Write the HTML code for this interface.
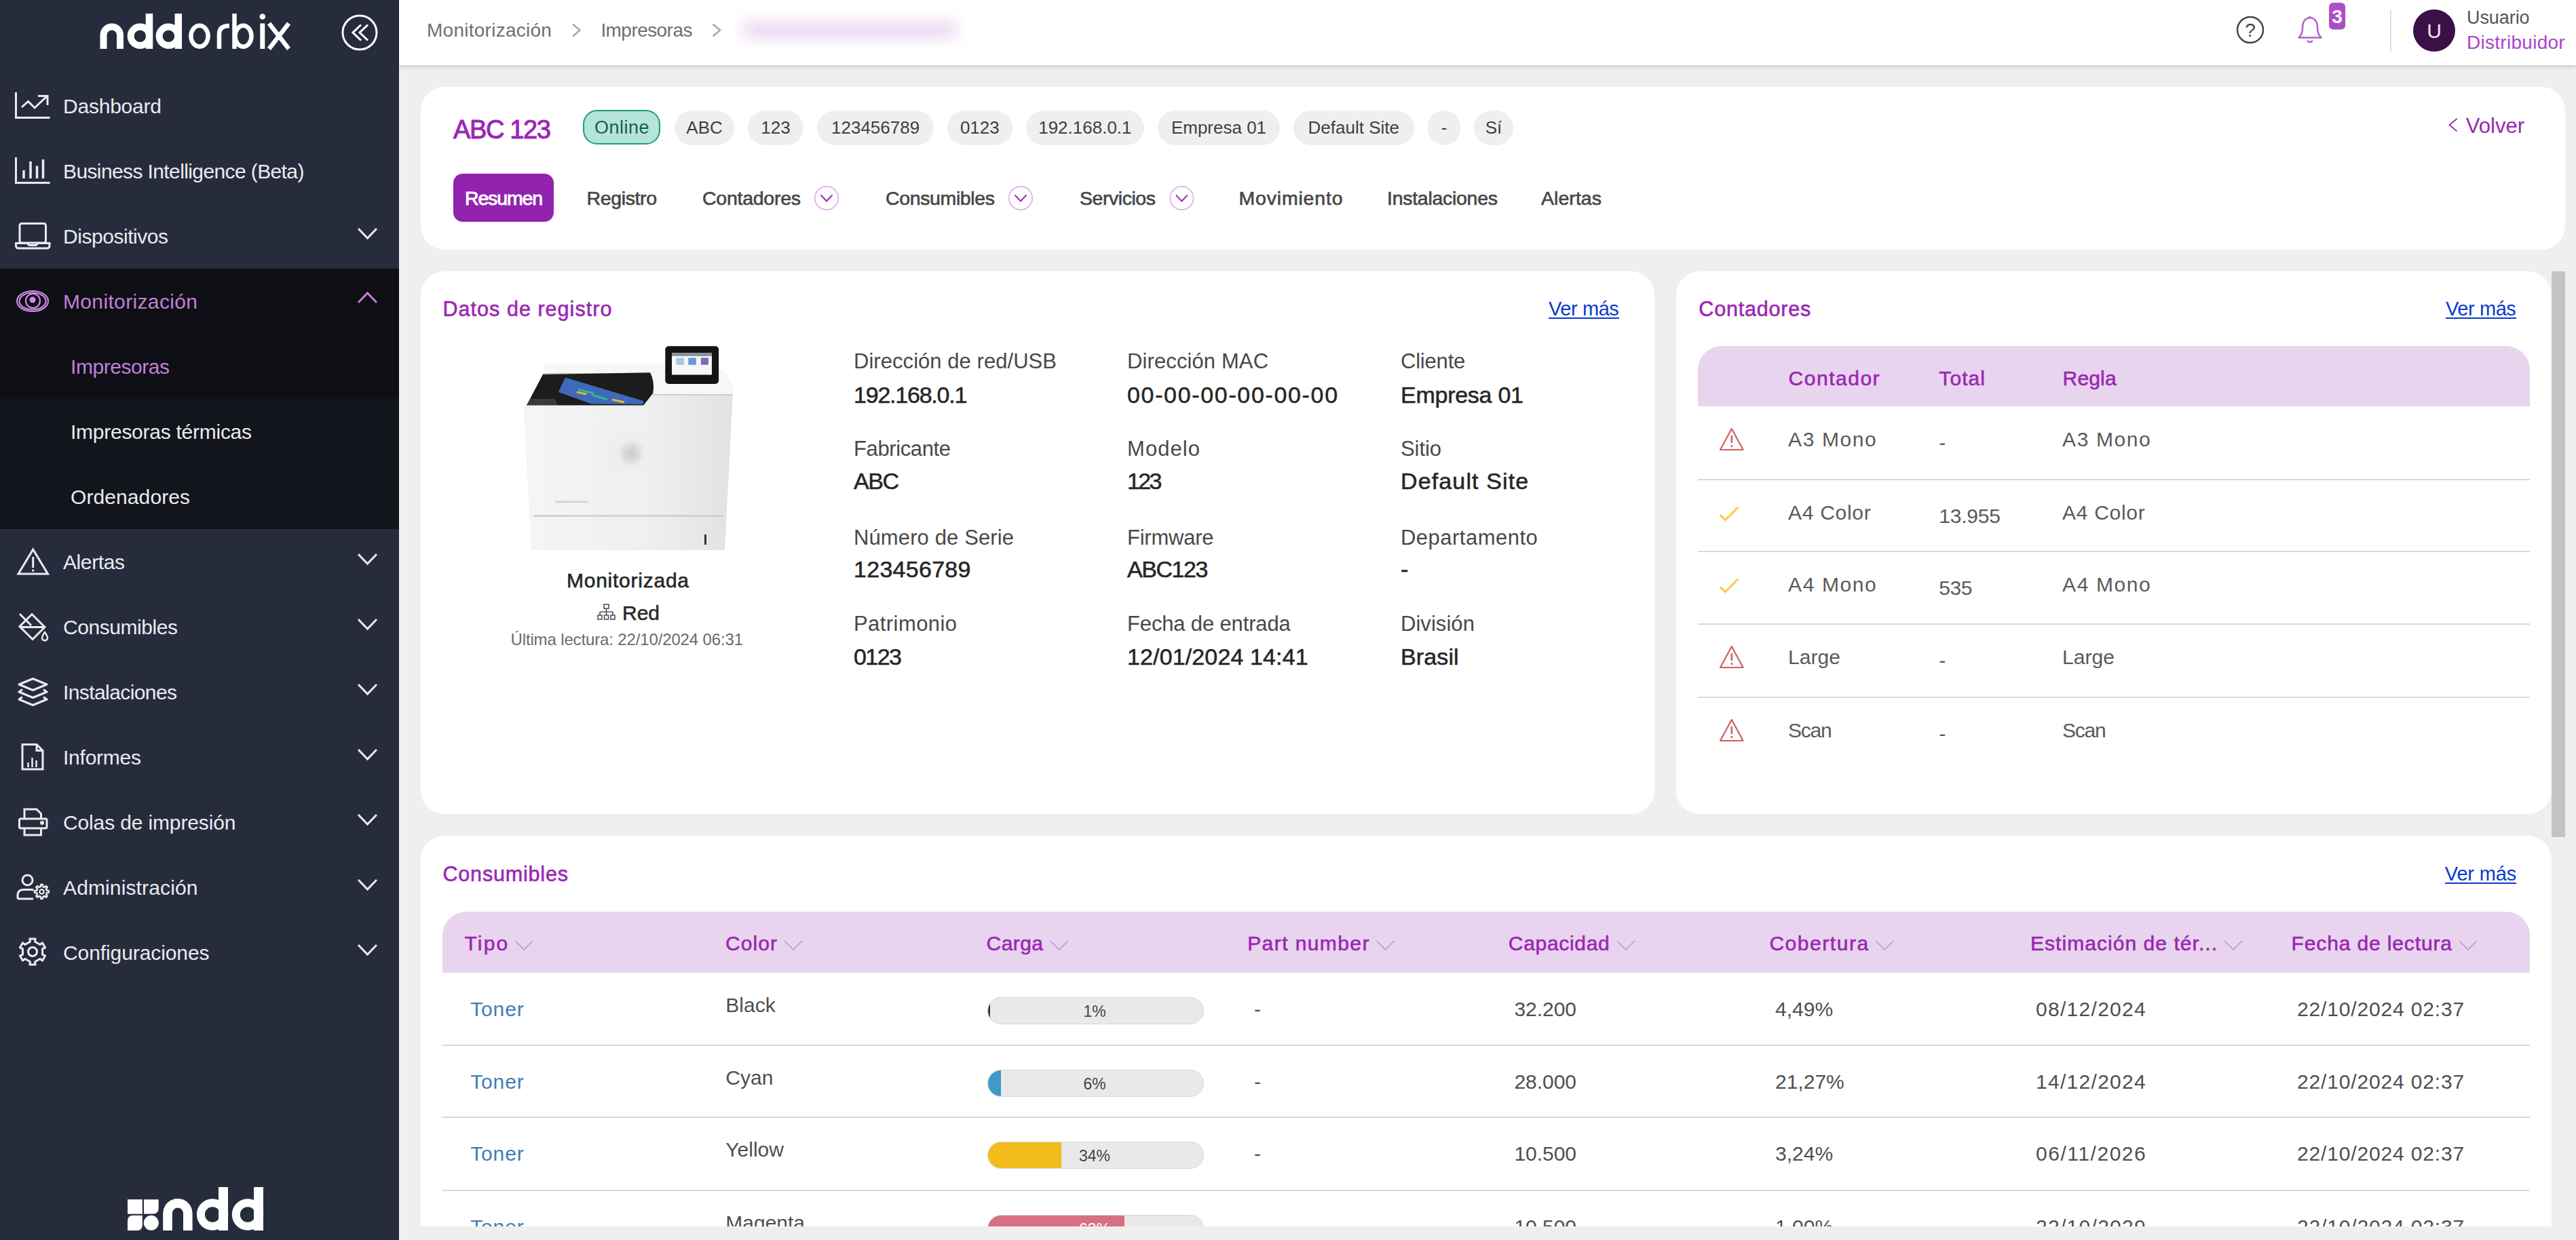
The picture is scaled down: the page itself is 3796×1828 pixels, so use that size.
<!DOCTYPE html>
<html><head><meta charset="utf-8">
<style>
*{box-sizing:border-box;margin:0;padding:0}
html,body{width:3796px;height:1828px;overflow:hidden;background:#efefef;font-family:"Liberation Sans",sans-serif}
.abs{position:absolute}
.tx{position:absolute;white-space:nowrap;line-height:1}
.card{position:absolute;background:#fff;border-radius:35px}
.chip{position:absolute;top:162.5px;height:51.5px;border-radius:26px;background:#efefef}
</style></head>
<body>

<div class="abs" style="left:0;top:0;width:588px;height:1828px;background:#272c3d"></div>
<div class="abs" style="left:0;top:396px;width:588px;height:192px;background:#0e0f14"></div>
<div class="abs" style="left:0;top:588px;width:588px;height:192px;background:#13151c"></div>
<div class="tx" style="left:93.0px;top:142.1px;font-size:30px;color:#ebebef;letter-spacing:-0.22px;">Dashboard</div>
<div class="tx" style="left:93.0px;top:238.1px;font-size:30px;color:#ebebef;letter-spacing:-0.61px;">Business Intelligence (Beta)</div>
<div class="tx" style="left:93.0px;top:334.1px;font-size:30px;color:#ebebef;letter-spacing:-0.46px;">Dispositivos</div>
<div class="tx" style="left:93.0px;top:430.1px;font-size:30px;color:#c07fd8;letter-spacing:0.35px;">Monitorización</div>
<div class="tx" style="left:93.0px;top:814.1px;font-size:30px;color:#ebebef;letter-spacing:-0.40px;">Alertas</div>
<div class="tx" style="left:93.0px;top:910.1px;font-size:30px;color:#ebebef;letter-spacing:-0.44px;">Consumibles</div>
<div class="tx" style="left:93.0px;top:1006.1px;font-size:30px;color:#ebebef;letter-spacing:-0.59px;">Instalaciones</div>
<div class="tx" style="left:93.0px;top:1102.1px;font-size:30px;color:#ebebef;letter-spacing:-0.24px;">Informes</div>
<div class="tx" style="left:93.0px;top:1198.1px;font-size:30px;color:#ebebef;letter-spacing:-0.14px;">Colas de impresión</div>
<div class="tx" style="left:93.0px;top:1294.1px;font-size:30px;color:#ebebef;letter-spacing:0.13px;">Administración</div>
<div class="tx" style="left:93.0px;top:1390.1px;font-size:30px;color:#ebebef;letter-spacing:-0.09px;">Configuraciones</div>
<div class="tx" style="left:104.0px;top:525.6px;font-size:30px;color:#c07fd8;letter-spacing:-0.45px;">Impresoras</div>
<div class="tx" style="left:104.0px;top:621.6px;font-size:30px;color:#ebebef;letter-spacing:-0.26px;">Impresoras térmicas</div>
<div class="tx" style="left:104.0px;top:717.6px;font-size:30px;color:#ebebef;letter-spacing:0.09px;">Ordenadores</div>
<svg class="abs" style="left:0;top:0" width="588" height="1828" fill="none" stroke="#ebebef" stroke-width="3">
<path d="M528,337 L541.5,351 L555,337"/>
<path d="M528,446 L541.5,432 L555,446" stroke="#c07fd8"/>
<path d="M528,817 L541.5,831 L555,817"/>
<path d="M528,913 L541.5,927 L555,913"/>
<path d="M528,1009 L541.5,1023 L555,1009"/>
<path d="M528,1105 L541.5,1119 L555,1105"/>
<path d="M528,1201 L541.5,1215 L555,1201"/>
<path d="M528,1297 L541.5,1311 L555,1297"/>
<path d="M528,1393 L541.5,1407 L555,1393"/>
<!-- dashboard -->
<path d="M23.5,136 V173.5 H73.5"/>
<path d="M32,158 L41.5,149.5 L51,159 L69.5,141.5"/>
<path d="M56,141.5 H70 V155"/>
<!-- BI -->
<path d="M23.5,232 V269.5 H73.5"/>
<path d="M35,251 V263 M45,238 V263 M54.5,244.5 V263 M63.5,235 V263" stroke-width="3.5"/>
<!-- laptop -->
<rect x="29" y="329.5" width="38.5" height="28.5" rx="3"/>
<path d="M23.5,358.5 H40 L43,361.5 H53 L56,358.5 H73 V362 Q73,366 69,366 H27.5 Q23.5,366 23.5,362 Z"/>
<!-- eye -->
<g stroke="#d08be6" stroke-width="2.2">
<ellipse cx="48" cy="444" rx="23" ry="15"/>
<ellipse cx="48" cy="444" rx="19.5" ry="12.5"/>
<circle cx="48.5" cy="443.5" r="10.5"/>
<circle cx="48" cy="442" r="4.5" fill="#d08be6" stroke="none"/>
</g>
<!-- alert -->
<path d="M48.7,810 L27,846 H70.5 Z"/>
<path d="M48.7,821 V837 M48.7,839.5 V842.5"/>
<!-- consumibles bucket -->
<path d="M47,905.5 L66,924.5 L48,942.5 L29,923.5 Z"/>
<path d="M29,924.5 H65"/>
<path d="M29,905 L46,922"/>
<path d="M66,932 Q60,940 63,943 Q66,945.5 69,943 Q72,940 66,932 Z" stroke-width="2.5"/>
<!-- layers -->
<path d="M28,1009 L48.5,1000.5 L69,1009 L48.5,1017.5 Z" stroke-linejoin="round"/>
<path d="M33,1016.5 L28,1020 L48.5,1028.5 L69,1020 L64,1016.5" stroke-linejoin="round"/>
<path d="M33,1027.5 L28,1031 L48.5,1039.5 L69,1031 L64,1027.5" stroke-linejoin="round"/>
<!-- informes -->
<path d="M33,1097.5 H54 L63,1106.5 V1134 H33 Z"/>
<path d="M54,1097.5 V1106.5 H63"/>
<path d="M41.5,1124 V1131 M47.5,1117 V1131 M53.5,1121 V1131" stroke-width="2.5"/>
<!-- printer -->
<path d="M36,1207 V1193 H54 L60.5,1199.5 V1207"/>
<rect x="28.5" y="1207" width="40.5" height="14" rx="2"/>
<path d="M36,1221 V1231 H60.5 V1221"/>
<circle cx="62" cy="1213" r="1.5" fill="#f4f4f4"/>
<!-- admin -->
<circle cx="40.5" cy="1297.5" r="7.5"/>
<path d="M26,1325 V1320 Q26,1311.5 34.5,1311.5 H46 Q48,1311.5 49.5,1312.5"/>
<path d="M26,1325 H49"/>
<path d="M68.90,1312.78 L71.91,1313.12 L71.91,1315.88 L68.90,1316.22 L67.95,1318.52 L69.84,1320.88 L67.88,1322.84 L65.52,1320.95 L63.22,1321.90 L62.88,1324.91 L60.12,1324.91 L59.78,1321.90 L57.48,1320.95 L55.12,1322.84 L53.16,1320.88 L55.05,1318.52 L54.10,1316.22 L51.09,1315.88 L51.09,1313.12 L54.10,1312.78 L55.05,1310.48 L53.16,1308.12 L55.12,1306.16 L57.48,1308.05 L59.78,1307.10 L60.12,1304.09 L62.88,1304.09 L63.22,1307.10 L65.52,1308.05 L67.88,1306.16 L69.84,1308.12 L67.95,1310.48 Z" stroke-width="2.5" stroke-linejoin="round"/>
<circle cx="61.5" cy="1314.5" r="3.2" stroke-width="2.2"/>
<!-- gear -->
<path d="M44.45,1388.22 L43.82,1383.95 L52.18,1383.95 L51.55,1388.22 L59.03,1392.54 L62.41,1389.86 L66.58,1397.10 L62.57,1398.68 L62.57,1407.32 L66.58,1408.90 L62.41,1416.14 L59.03,1413.46 L51.55,1417.78 L52.18,1422.05 L43.82,1422.05 L44.45,1417.78 L36.97,1413.46 L33.59,1416.14 L29.42,1408.90 L33.43,1407.32 L33.43,1398.68 L29.42,1397.10 L33.59,1389.86 L36.97,1392.54 Z" stroke-linejoin="round"/>
<circle cx="48" cy="1403" r="6.5"/>

<g stroke="#fff" fill="none">
<path d="M152.5,72 V51.75 A12.25,12.25 0 0 1 177,51.75 V72" stroke-width="10"/>
<circle cx="206.4" cy="53.25" r="13.75" stroke-width="10"/>
<path d="M220,20 V72" stroke-width="10.5"/>
<circle cx="248.4" cy="53.25" r="13.75" stroke-width="10"/>
<path d="M262.8,20 V72" stroke-width="10.5"/>
<ellipse cx="294" cy="53.25" rx="12.6" ry="15.4" stroke-width="6.5"/>
<path d="M323,72 V50 Q323,38 338,38" stroke-width="6.5"/>
<path d="M345.5,20 V72" stroke-width="6.5"/>
<ellipse cx="358.5" cy="53.25" rx="12" ry="15.4" stroke-width="6.5"/>
<path d="M386.8,34.5 V72" stroke-width="7"/>
<circle cx="386.8" cy="24.5" r="4.3" fill="#fff" stroke="none"/>
<path d="M396.5,34.5 L425.5,72 M425.5,34.5 L396.5,72" stroke-width="6.5"/>
<circle cx="530" cy="48" r="25" stroke-width="3"/>
<path d="M532,36.5 L520,48 L532,59.5 M542,36.5 L530,48 L542,59.5" stroke-width="3"/>
</g>
<g fill="#fff" stroke="none">
<rect x="188" y="1768.2" width="21.8" height="21.4"/>
<path d="M212,1768.2 H233.7 V1781 Q233.7,1789.6 225,1789.6 H212 Z"/>
<path d="M196,1791.8 H209.8 V1806 Q209.8,1813.9 202,1813.9 H188 V1800 Q188,1791.8 196,1791.8 Z"/>
<circle cx="222.8" cy="1802.8" r="11"/>
</g>
<g stroke="#fff" fill="none">
<path d="M247,1814 V1788.7 A14.9,14.9 0 0 1 276.8,1788.7 V1814" stroke-width="13.6"/>
<circle cx="313.1" cy="1790.5" r="17.2" stroke-width="12"/>
<path d="M329,1750 V1814" stroke-width="14"/>
<circle cx="365" cy="1790.5" r="17.2" stroke-width="12"/>
<path d="M381,1750 V1814" stroke-width="14"/>
</g>
</svg>
<div class="abs" style="left:588px;top:0;width:3208px;height:96px;background:#fff;box-shadow:0 3px 6px rgba(0,0,0,.13)"></div>
<div class="tx" style="left:629.0px;top:30.6px;font-size:28px;color:#6b6f78;letter-spacing:0.26px;">Monitorización</div>
<div class="tx" style="left:885.4px;top:30.6px;font-size:28px;color:#6b6f78;letter-spacing:-0.56px;">Impresoras</div>
<svg class="abs" style="left:0;top:0" width="3796" height="96" fill="none">
<path d="M844,35.5 L854.5,44.5 L844,53.5 M1050.5,35.5 L1061,44.5 L1050.5,53.5" stroke="#a9a9a9" stroke-width="2.5"/>
<circle cx="3316" cy="44" r="19" stroke="#454545" stroke-width="2.5"/>
<path d="M3387.5,55.5 H3420.5 Q3415,50 3415,41 Q3415,27.5 3404,26 Q3393,27.5 3393,41 Q3393,50 3387.5,55.5 Z" stroke="#b560cc" stroke-width="2.5" stroke-linejoin="round"/>
<path d="M3404,23.5 V26.5 M3400,60 Q3404,64 3408,60" stroke="#b560cc" stroke-width="2.5"/>
<rect x="3432" y="4" width="24" height="39.5" rx="6" fill="#ad4ec8"/>
<rect x="3522" y="14" width="2" height="62" fill="#dedede"/>
<circle cx="3587" cy="45" r="31" fill="#3a1046"/>
</svg>
<div class="abs" style="left:1080px;top:13px;width:343px;height:55px;overflow:hidden"><div class="abs" style="left:14px;top:19px;width:317px;height:24px;background:#e9d6f1;filter:blur(11px);border-radius:10px"></div></div>
<div class="tx" style="left:3308.2px;top:31.3px;font-size:28px;color:#454545;">?</div>
<div class="tx" style="left:3436.2px;top:11.0px;font-size:28px;color:#ffffff;font-weight:bold;">3</div>
<div class="tx" style="left:3576.2px;top:31.3px;font-size:30px;color:#ece6ee;">U</div>
<div class="tx" style="left:3635.0px;top:13.1px;font-size:27px;color:#555555;letter-spacing:-0.07px;">Usuario</div>
<div class="tx" style="left:3635.0px;top:49.2px;font-size:28px;color:#ab45c6;letter-spacing:0.28px;">Distribuidor</div>
<div class="card" style="left:620px;top:128px;width:3160px;height:240px"></div>
<div class="tx" style="left:668.0px;top:171.8px;font-size:38px;color:#9a27b3;-webkit-text-stroke:1.0px #9a27b3;letter-spacing:-1.35px;">ABC 123</div>
<div class="abs" style="left:858.5px;top:161.7px;width:114.5px;height:51.7px;border-radius:21px;background:#b5e4d8;border:2px solid #1c9c7f"></div>
<div class="tx" style="left:876.0px;top:174.5px;font-size:27px;color:#17604f;letter-spacing:0.47px;">Online</div>
<div class="chip" style="left:994px;width:88.0px"></div>
<div class="tx" style="left:1011.3px;top:175.4px;font-size:26px;color:#3f3f3f;">ABC</div>
<div class="chip" style="left:1102px;width:82.0px"></div>
<div class="tx" style="left:1121.3px;top:175.4px;font-size:26px;color:#3f3f3f;">123</div>
<div class="chip" style="left:1204px;width:172.0px"></div>
<div class="tx" style="left:1225.0px;top:175.4px;font-size:26px;color:#3f3f3f;">123456789</div>
<div class="chip" style="left:1396px;width:95.7px"></div>
<div class="tx" style="left:1414.9px;top:175.4px;font-size:26px;color:#3f3f3f;">0123</div>
<div class="chip" style="left:1512px;width:173.7px"></div>
<div class="tx" style="left:1530.2px;top:175.4px;font-size:26px;color:#3f3f3f;">192.168.0.1</div>
<div class="chip" style="left:1706px;width:180.0px"></div>
<div class="tx" style="left:1725.9px;top:175.4px;font-size:26px;color:#3f3f3f;">Empresa 01</div>
<div class="chip" style="left:1906px;width:177.6px"></div>
<div class="tx" style="left:1927.6px;top:175.4px;font-size:26px;color:#3f3f3f;">Default Site</div>
<div class="chip" style="left:2104px;width:48.0px"></div>
<div class="tx" style="left:2123.7px;top:175.4px;font-size:26px;color:#3f3f3f;">-</div>
<div class="chip" style="left:2172px;width:58.0px"></div>
<div class="tx" style="left:2188.7px;top:175.4px;font-size:26px;color:#3f3f3f;">Sí</div>
<svg class="abs" style="left:3600px;top:165px" width="30" height="40" fill="none"><path d="M20.5,10 L9.5,19.2 L20.5,28.5" stroke="#9a27b3" stroke-width="1.8"/></svg>
<div class="tx" style="left:3633.8px;top:170.0px;font-size:31px;color:#9a27b3;letter-spacing:0.02px;">Volver</div>
<div class="abs" style="left:668px;top:256px;width:148px;height:71px;border-radius:14px;background:#9223af"></div>
<div class="tx" style="left:685.0px;top:277.9px;font-size:28.5px;color:#ffffff;-webkit-text-stroke:0.9px #ffffff;letter-spacing:-1.16px;">Resumen</div>
<div class="tx" style="left:864.5px;top:277.9px;font-size:28.5px;color:#474747;-webkit-text-stroke:0.65px #474747;letter-spacing:-0.37px;">Registro</div>
<div class="tx" style="left:1035.0px;top:277.9px;font-size:28.5px;color:#474747;-webkit-text-stroke:0.65px #474747;letter-spacing:-0.26px;">Contadores</div>
<div class="tx" style="left:1305.0px;top:277.9px;font-size:28.5px;color:#474747;-webkit-text-stroke:0.65px #474747;letter-spacing:-0.37px;">Consumibles</div>
<div class="tx" style="left:1591.0px;top:277.9px;font-size:28.5px;color:#474747;-webkit-text-stroke:0.65px #474747;letter-spacing:-0.45px;">Servicios</div>
<div class="tx" style="left:1825.5px;top:277.9px;font-size:28.5px;color:#474747;-webkit-text-stroke:0.65px #474747;letter-spacing:0.81px;">Movimiento</div>
<div class="tx" style="left:2044.0px;top:277.9px;font-size:28.5px;color:#474747;-webkit-text-stroke:0.65px #474747;letter-spacing:-0.28px;">Instalaciones</div>
<div class="tx" style="left:2271.0px;top:277.9px;font-size:28.5px;color:#474747;-webkit-text-stroke:0.65px #474747;letter-spacing:0.05px;">Alertas</div>
<svg class="abs" style="left:0;top:0" width="2400" height="400" fill="none">
<circle cx="1218" cy="292" r="17.2" stroke="#ddb0ea" stroke-width="1.7"/>
<path d="M1209.5,287.5 L1218,296.5 L1226.5,287.5" stroke="#9b2db5" stroke-width="2"/>
<circle cx="1504" cy="292" r="17.2" stroke="#ddb0ea" stroke-width="1.7"/>
<path d="M1495.5,287.5 L1504,296.5 L1512.5,287.5" stroke="#9b2db5" stroke-width="2"/>
<circle cx="1741.4" cy="292" r="17.2" stroke="#ddb0ea" stroke-width="1.7"/>
<path d="M1732.9,287.5 L1741.4,296.5 L1749.9,287.5" stroke="#9b2db5" stroke-width="2"/>
</svg>
<div class="card" style="left:620px;top:400px;width:1818px;height:800px"></div>
<div class="tx" style="left:652.5px;top:440.2px;font-size:30.5px;color:#9a27b3;-webkit-text-stroke:0.6px #9a27b3;letter-spacing:1.04px;">Datos de registro</div>
<div class="tx" style="left:2281.9px;top:441.4px;font-size:29px;color:#0a3acc;letter-spacing:-0.40px;">Ver más</div>
<div class="abs" style="left:2281.9px;top:468px;width:104px;height:2px;background:#0a3acc"></div>
<svg class="abs" style="left:760px;top:500px" width="330" height="320">
<defs>
<linearGradient id="bg1" x1="0" x2="1" y1="0" y2="0"><stop offset="0" stop-color="#f5f5f5"/><stop offset="0.6" stop-color="#efefef"/><stop offset="1" stop-color="#e2e2e2"/></linearGradient>
<linearGradient id="bg2" x1="0" x2="0" y1="0" y2="1"><stop offset="0" stop-color="#ffffff" stop-opacity="0.6"/><stop offset="1" stop-color="#ffffff" stop-opacity="0"/></linearGradient>
<radialGradient id="blob"><stop offset="0" stop-color="#cbcbcb"/><stop offset="0.5" stop-color="#dcdcdc"/><stop offset="1" stop-color="#eeeeee" stop-opacity="0"/></radialGradient>
</defs>
<path d="M42,37 H280 Q316,40 320,77 L308,311 H23 L11.5,100 L16,97 L40,52 Z" fill="url(#bg1)"/>
<path d="M42,37 H280 Q316,40 320,77 L320,82 H202 L198,50 H40 Z" fill="#f7f7f7"/>
<path d="M40,51 H198" stroke="#c9c9c9" stroke-width="2"/>
<path d="M202,82 H320" stroke="#cdcdcd" stroke-width="2"/>
<path d="M40,52 L198,49.3 Q205,62 202.4,79.4 L188.3,97.4 H16 Z" fill="#1c1c1c"/>
<path d="M22,88 L58,88 L62,97 H16 Z" fill="#3a3a3a"/>
<path d="M73,56.4 L188,91 L188.3,96 L111.5,95.4 L62.8,78 Z" fill="#3f69b9"/>
<path d="M92,74 L115,80 M112,82 L135,89" stroke="#2fb597" stroke-width="3"/>
<path d="M90,78 L104,81 M142,89 L160,93" stroke="#eab52c" stroke-width="3"/>
<rect x="220.3" y="10.2" width="78.8" height="55.8" rx="5" fill="#141414"/>
<rect x="230" y="20" width="59" height="32.5" fill="#f4f6f8"/>
<rect x="230" y="20" width="59" height="5" fill="#8d9298"/>
<rect x="236.4" y="27.5" width="11.5" height="10.3" fill="#a9c7ea"/>
<rect x="254.3" y="27.5" width="11.5" height="10.3" fill="#6b9ad8"/>
<rect x="272.9" y="27.5" width="11" height="10.3" fill="#7e68b8"/>
<path d="M26,260.6 H306" stroke="#c6c6c6" stroke-width="2"/>
<rect x="127.7" y="138" width="74.6" height="57.8" fill="#efefef"/>
<circle cx="170" cy="168" r="24" fill="url(#blob)"/>
<rect x="58" y="238.5" width="48" height="2.5" fill="#d0d0d0"/>
<rect x="278" y="288" width="3" height="15" fill="#333"/>
</svg>
<div class="tx" style="left:835.0px;top:840.6px;font-size:30px;color:#262626;-webkit-text-stroke:0.6px #262626;letter-spacing:0.75px;">Monitorizada</div>
<svg class="abs" style="left:878px;top:888px" width="32" height="30" fill="none" stroke="#555" stroke-width="1.6">
<rect x="12" y="3" width="7" height="6"/><path d="M15.5,9 V14 M6,14 H25 M6,14 V19 M15.5,14 V19 M25,14 V19"/>
<rect x="3" y="19" width="6" height="6"/><rect x="12.5" y="19" width="6" height="6"/><rect x="22" y="19" width="6" height="6"/>
</svg>
<div class="tx" style="left:917.0px;top:888.6px;font-size:30px;color:#262626;-webkit-text-stroke:0.5px #262626;">Red</div>
<div class="tx" style="left:752.5px;top:931.2px;font-size:24px;color:#6a6a6a;letter-spacing:-0.14px;">Última lectura: 22/10/2024 06:31</div>
<div class="tx" style="left:1258.0px;top:517.3px;font-size:31px;color:#484848;letter-spacing:0.05px;">Dirección de red/USB</div>
<div class="tx" style="left:1258.0px;top:564.9px;font-size:34px;color:#262626;-webkit-text-stroke:0.55px #262626;letter-spacing:-1.22px;">192.168.0.1</div>
<div class="tx" style="left:1661.0px;top:517.3px;font-size:31px;color:#484848;letter-spacing:0.11px;">Dirección MAC</div>
<div class="tx" style="left:1661.0px;top:564.9px;font-size:34px;color:#262626;-webkit-text-stroke:0.55px #262626;letter-spacing:1.66px;">00-00-00-00-00-00</div>
<div class="tx" style="left:2064.0px;top:517.3px;font-size:31px;color:#484848;letter-spacing:-0.20px;">Cliente</div>
<div class="tx" style="left:2064.0px;top:564.9px;font-size:34px;color:#262626;-webkit-text-stroke:0.55px #262626;letter-spacing:-0.26px;">Empresa 01</div>
<div class="tx" style="left:1258.0px;top:645.8px;font-size:31px;color:#484848;letter-spacing:-0.38px;">Fabricante</div>
<div class="tx" style="left:1258.0px;top:692.2px;font-size:34px;color:#262626;-webkit-text-stroke:0.55px #262626;letter-spacing:-1.45px;">ABC</div>
<div class="tx" style="left:1661.0px;top:645.8px;font-size:31px;color:#484848;letter-spacing:1.07px;">Modelo</div>
<div class="tx" style="left:1661.0px;top:692.2px;font-size:34px;color:#262626;-webkit-text-stroke:0.55px #262626;letter-spacing:-2.66px;">123</div>
<div class="tx" style="left:2064.0px;top:645.8px;font-size:31px;color:#484848;letter-spacing:-0.07px;">Sitio</div>
<div class="tx" style="left:2064.0px;top:692.2px;font-size:34px;color:#262626;-webkit-text-stroke:0.55px #262626;letter-spacing:1.13px;">Default Site</div>
<div class="tx" style="left:1258.0px;top:776.5px;font-size:31px;color:#484848;letter-spacing:0.12px;">Número de Serie</div>
<div class="tx" style="left:1258.0px;top:822.2px;font-size:34px;color:#262626;-webkit-text-stroke:0.55px #262626;letter-spacing:0.28px;">123456789</div>
<div class="tx" style="left:1661.0px;top:776.5px;font-size:31px;color:#484848;letter-spacing:-0.24px;">Firmware</div>
<div class="tx" style="left:1661.0px;top:822.2px;font-size:34px;color:#262626;-webkit-text-stroke:0.55px #262626;letter-spacing:-1.46px;">ABC123</div>
<div class="tx" style="left:2064.0px;top:776.5px;font-size:31px;color:#484848;letter-spacing:0.48px;">Departamento</div>
<div class="tx" style="left:2064.0px;top:822.2px;font-size:34px;color:#262626;-webkit-text-stroke:0.55px #262626;">-</div>
<div class="tx" style="left:1258.0px;top:903.8px;font-size:31px;color:#484848;letter-spacing:0.43px;">Patrimonio</div>
<div class="tx" style="left:1258.0px;top:950.9px;font-size:34px;color:#262626;-webkit-text-stroke:0.55px #262626;letter-spacing:-1.54px;">0123</div>
<div class="tx" style="left:1661.0px;top:903.8px;font-size:31px;color:#484848;letter-spacing:-0.15px;">Fecha de entrada</div>
<div class="tx" style="left:1661.0px;top:950.9px;font-size:34px;color:#262626;-webkit-text-stroke:0.55px #262626;letter-spacing:0.13px;">12/01/2024 14:41</div>
<div class="tx" style="left:2064.0px;top:903.8px;font-size:31px;color:#484848;letter-spacing:0.05px;">División</div>
<div class="tx" style="left:2064.0px;top:950.9px;font-size:34px;color:#262626;-webkit-text-stroke:0.55px #262626;letter-spacing:0.12px;">Brasil</div>
<div class="card" style="left:2470px;top:400px;width:1290px;height:800px"></div>
<div class="tx" style="left:2503.3px;top:439.5px;font-size:30.5px;color:#9a27b3;-webkit-text-stroke:0.6px #9a27b3;letter-spacing:0.81px;">Contadores</div>
<div class="tx" style="left:3603.9px;top:441.4px;font-size:29px;color:#0a3acc;letter-spacing:-0.40px;">Ver más</div>
<div class="abs" style="left:3603.9px;top:468px;width:104px;height:2px;background:#0a3acc"></div>
<div class="abs" style="left:2501.7px;top:509.7px;width:1226.3px;height:89.3px;background:#e9d4ef;border-radius:35px 35px 0 0"></div>
<div class="tx" style="left:2635.6px;top:542.6px;font-size:30px;color:#9a27b3;-webkit-text-stroke:0.6px #9a27b3;letter-spacing:1.51px;">Contador</div>
<div class="tx" style="left:2857.3px;top:542.6px;font-size:30px;color:#9a27b3;-webkit-text-stroke:0.6px #9a27b3;letter-spacing:1.08px;">Total</div>
<div class="tx" style="left:3039.6px;top:542.6px;font-size:30px;color:#9a27b3;-webkit-text-stroke:0.6px #9a27b3;letter-spacing:0.15px;">Regla</div>
<div class="tx" style="left:2635.0px;top:633.1px;font-size:30px;color:#5a5a5a;letter-spacing:1.62px;">A3 Mono</div>
<div class="tx" style="left:3039.0px;top:633.1px;font-size:30px;color:#5a5a5a;letter-spacing:1.62px;">A3 Mono</div>
<div class="tx" style="left:2857.3px;top:638.1px;font-size:30px;color:#5a5a5a;">-</div>
<div class="tx" style="left:2635.0px;top:740.6px;font-size:30px;color:#5a5a5a;letter-spacing:0.72px;">A4 Color</div>
<div class="tx" style="left:3039.0px;top:740.6px;font-size:30px;color:#5a5a5a;letter-spacing:0.72px;">A4 Color</div>
<div class="tx" style="left:2857.3px;top:745.6px;font-size:30px;color:#5a5a5a;letter-spacing:-0.21px;">13.955</div>
<div class="abs" style="left:2501.7px;top:705.5px;width:1226.3px;height:2px;background:#d9d9d9"></div>
<div class="tx" style="left:2635.0px;top:846.6px;font-size:30px;color:#5a5a5a;letter-spacing:1.62px;">A4 Mono</div>
<div class="tx" style="left:3039.0px;top:846.6px;font-size:30px;color:#5a5a5a;letter-spacing:1.62px;">A4 Mono</div>
<div class="tx" style="left:2857.3px;top:851.6px;font-size:30px;color:#5a5a5a;letter-spacing:-0.43px;">535</div>
<div class="abs" style="left:2501.7px;top:811.5px;width:1226.3px;height:2px;background:#d9d9d9"></div>
<div class="tx" style="left:2635.0px;top:954.1px;font-size:30px;color:#5a5a5a;letter-spacing:0.04px;">Large</div>
<div class="tx" style="left:3039.0px;top:954.1px;font-size:30px;color:#5a5a5a;letter-spacing:0.04px;">Large</div>
<div class="tx" style="left:2857.3px;top:959.1px;font-size:30px;color:#5a5a5a;">-</div>
<div class="abs" style="left:2501.7px;top:919px;width:1226.3px;height:2px;background:#d9d9d9"></div>
<div class="tx" style="left:2635.0px;top:1062.1px;font-size:30px;color:#5a5a5a;letter-spacing:-1.23px;">Scan</div>
<div class="tx" style="left:3039.0px;top:1062.1px;font-size:30px;color:#5a5a5a;letter-spacing:-1.23px;">Scan</div>
<div class="tx" style="left:2857.3px;top:1067.1px;font-size:30px;color:#5a5a5a;">-</div>
<div class="abs" style="left:2501.7px;top:1027px;width:1226.3px;height:2px;background:#d9d9d9"></div>
<svg class="abs" style="left:0;top:0" width="3796" height="1200" fill="none">
<path d="M2551.8,632 L2535,663 H2568.6 Z" stroke="#cf5f5f" stroke-width="2.2" stroke-linejoin="round"/>
<path d="M2551.8,642 V653 M2551.8,656 V659" stroke="#cf5f5f" stroke-width="2.5"/>
<path d="M2534.5,759.5 L2542.5,766.5 L2561.5,747.5" stroke="#f6cd43" stroke-width="3"/>
<path d="M2534.5,865.5 L2542.5,872.5 L2561.5,853.5" stroke="#f6cd43" stroke-width="3"/>
<path d="M2551.8,953 L2535,984 H2568.6 Z" stroke="#cf5f5f" stroke-width="2.2" stroke-linejoin="round"/>
<path d="M2551.8,963 V974 M2551.8,977 V980" stroke="#cf5f5f" stroke-width="2.5"/>
<path d="M2551.8,1061 L2535,1092 H2568.6 Z" stroke="#cf5f5f" stroke-width="2.2" stroke-linejoin="round"/>
<path d="M2551.8,1071 V1082 M2551.8,1085 V1088" stroke="#cf5f5f" stroke-width="2.5"/>
</svg>
<div class="abs" style="left:0;top:1232px;width:3796px;height:576px;overflow:hidden">
<div class="card" style="left:620px;top:0;width:3140px;height:900px"></div>
<div class="tx" style="left:652.5px;top:40.7px;font-size:30.5px;color:#9a27b3;-webkit-text-stroke:0.6px #9a27b3;letter-spacing:0.81px;">Consumibles</div>
<div class="tx" style="left:3602.8px;top:42.0px;font-size:29px;color:#0a3acc;letter-spacing:-0.15px;">Ver más</div>
<div class="abs" style="left:3602.8px;top:68.59999999999991px;width:105.5px;height:2px;background:#0a3acc"></div>
<div class="abs" style="left:652px;top:112px;width:3076px;height:90px;background:#e9d4ef;border-radius:35px 35px 0 0"></div>
<div class="tx" style="left:684.4px;top:144.1px;font-size:30px;color:#9a27b3;-webkit-text-stroke:0.6px #9a27b3;letter-spacing:2.18px;">Tipo</div>
<div class="tx" style="left:1069.0px;top:144.1px;font-size:30px;color:#9a27b3;-webkit-text-stroke:0.6px #9a27b3;letter-spacing:1.07px;">Color</div>
<div class="tx" style="left:1453.6px;top:144.1px;font-size:30px;color:#9a27b3;-webkit-text-stroke:0.6px #9a27b3;letter-spacing:0.42px;">Carga</div>
<div class="tx" style="left:1838.2px;top:144.1px;font-size:30px;color:#9a27b3;-webkit-text-stroke:0.6px #9a27b3;letter-spacing:1.42px;">Part number</div>
<div class="tx" style="left:2222.8px;top:144.1px;font-size:30px;color:#9a27b3;-webkit-text-stroke:0.6px #9a27b3;letter-spacing:0.69px;">Capacidad</div>
<div class="tx" style="left:2607.4px;top:144.1px;font-size:30px;color:#9a27b3;-webkit-text-stroke:0.6px #9a27b3;letter-spacing:1.54px;">Cobertura</div>
<div class="tx" style="left:2992.0px;top:144.1px;font-size:30px;color:#9a27b3;-webkit-text-stroke:0.6px #9a27b3;letter-spacing:1.05px;">Estimación de tér...</div>
<div class="tx" style="left:3376.6px;top:144.1px;font-size:30px;color:#9a27b3;-webkit-text-stroke:0.6px #9a27b3;letter-spacing:0.86px;">Fecha de lectura</div>
<svg class="abs" style="left:0;top:0" width="3796" height="600" fill="none">
<path d="M759.1999999999999,155 L772.1999999999999,168 L785.1999999999999,155" stroke="#c893dc" stroke-width="1.7"/>
<path d="M1156.0,155 L1169.0,168 L1182.0,155" stroke="#c893dc" stroke-width="1.7"/>
<path d="M1548.0,155 L1561.0,168 L1574.0,155" stroke="#c893dc" stroke-width="1.7"/>
<path d="M2028.5000000000002,155 L2041.5000000000002,168 L2054.5,155" stroke="#c893dc" stroke-width="1.7"/>
<path d="M2382.8,155 L2395.8,168 L2408.8,155" stroke="#c893dc" stroke-width="1.7"/>
<path d="M2764.1,155 L2777.1,168 L2790.1,155" stroke="#c893dc" stroke-width="1.7"/>
<path d="M3278.0000000000005,155 L3291.0000000000005,168 L3304.0000000000005,155" stroke="#c893dc" stroke-width="1.7"/>
<path d="M3624.0000000000005,155 L3637.0000000000005,168 L3650.0000000000005,155" stroke="#c893dc" stroke-width="1.7"/>
</svg>
<div class="tx" style="left:693.2px;top:241.2px;font-size:30px;color:#3f7db6;letter-spacing:0.86px;">Toner</div>
<div class="tx" style="left:1069.3px;top:234.6px;font-size:30px;color:#4f4f4f;">Black</div>
<div class="abs" style="left:1454.8px;top:238px;width:319px;height:40px;border-radius:20px;background:#e9e9e9;border:1.5px solid #d6d6d6;overflow:hidden"><div class="abs" style="left:0;top:8px;width:3px;height:24px;background:#333;border-radius:2px"></div></div>
<div class="tx" style="left:1596.4px;top:248.0px;font-size:23px;color:#444444;">1%</div>
<div class="tx" style="left:1848.0px;top:240.6px;font-size:30px;color:#4f4f4f;">-</div>
<div class="tx" style="left:2231.4px;top:240.6px;font-size:30px;color:#4f4f4f;letter-spacing:-0.03px;">32.200</div>
<div class="tx" style="left:2616.0px;top:240.6px;font-size:30px;color:#4f4f4f;">4,49%</div>
<div class="tx" style="left:3000.0px;top:240.6px;font-size:30px;color:#4f4f4f;letter-spacing:1.29px;">08/12/2024</div>
<div class="tx" style="left:3385.0px;top:240.6px;font-size:30px;color:#4f4f4f;letter-spacing:0.84px;">22/10/2024 02:37</div>
<div class="tx" style="left:693.2px;top:348.2px;font-size:30px;color:#3f7db6;letter-spacing:0.86px;">Toner</div>
<div class="tx" style="left:1069.3px;top:341.6px;font-size:30px;color:#4f4f4f;">Cyan</div>
<div class="abs" style="left:1454.8px;top:345px;width:319px;height:40px;border-radius:20px;background:#e9e9e9;border:1.5px solid #d6d6d6;overflow:hidden"><div class="abs" style="left:0;top:0;width:19.1px;height:40px;background:#3d9ac9"></div></div>
<div class="tx" style="left:1596.4px;top:355.0px;font-size:23px;color:#444444;">6%</div>
<div class="tx" style="left:1848.0px;top:347.6px;font-size:30px;color:#4f4f4f;">-</div>
<div class="tx" style="left:2231.4px;top:347.6px;font-size:30px;color:#4f4f4f;letter-spacing:-0.03px;">28.000</div>
<div class="tx" style="left:2616.0px;top:347.6px;font-size:30px;color:#4f4f4f;">21,27%</div>
<div class="tx" style="left:3000.0px;top:347.6px;font-size:30px;color:#4f4f4f;letter-spacing:1.29px;">14/12/2024</div>
<div class="tx" style="left:3385.0px;top:347.6px;font-size:30px;color:#4f4f4f;letter-spacing:0.84px;">22/10/2024 02:37</div>
<div class="abs" style="left:652px;top:308px;width:3076px;height:2px;background:#d9d9d9"></div>
<div class="tx" style="left:693.2px;top:454.2px;font-size:30px;color:#3f7db6;letter-spacing:0.86px;">Toner</div>
<div class="tx" style="left:1069.3px;top:447.6px;font-size:30px;color:#4f4f4f;">Yellow</div>
<div class="abs" style="left:1454.8px;top:451px;width:319px;height:40px;border-radius:20px;background:#e9e9e9;border:1.5px solid #d6d6d6;overflow:hidden"><div class="abs" style="left:0;top:0;width:108.5px;height:40px;background:#f2bd1c"></div></div>
<div class="tx" style="left:1590.0px;top:461.0px;font-size:23px;color:#444444;">34%</div>
<div class="tx" style="left:1848.0px;top:453.6px;font-size:30px;color:#4f4f4f;">-</div>
<div class="tx" style="left:2231.4px;top:453.6px;font-size:30px;color:#4f4f4f;letter-spacing:-0.03px;">10.500</div>
<div class="tx" style="left:2616.0px;top:453.6px;font-size:30px;color:#4f4f4f;">3,24%</div>
<div class="tx" style="left:3000.0px;top:453.6px;font-size:30px;color:#4f4f4f;letter-spacing:1.54px;">06/11/2026</div>
<div class="tx" style="left:3385.0px;top:453.6px;font-size:30px;color:#4f4f4f;letter-spacing:0.84px;">22/10/2024 02:37</div>
<div class="abs" style="left:652px;top:414px;width:3076px;height:2px;background:#d9d9d9"></div>
<div class="tx" style="left:693.2px;top:562.2px;font-size:30px;color:#3f7db6;letter-spacing:0.86px;">Toner</div>
<div class="tx" style="left:1069.3px;top:555.6px;font-size:30px;color:#4f4f4f;">Magenta</div>
<div class="abs" style="left:1454.8px;top:559px;width:319px;height:40px;border-radius:20px;background:#e9e9e9;border:1.5px solid #d6d6d6;overflow:hidden"><div class="abs" style="left:0;top:0;width:201.0px;height:40px;background:#d96f82"></div></div>
<div class="tx" style="left:1590.0px;top:569.0px;font-size:23px;color:#ffffff;">63%</div>
<div class="tx" style="left:1848.0px;top:561.6px;font-size:30px;color:#4f4f4f;">-</div>
<div class="tx" style="left:2231.4px;top:561.6px;font-size:30px;color:#4f4f4f;letter-spacing:-0.03px;">10.500</div>
<div class="tx" style="left:2616.0px;top:561.6px;font-size:30px;color:#4f4f4f;">1,00%</div>
<div class="tx" style="left:3000.0px;top:561.6px;font-size:30px;color:#4f4f4f;letter-spacing:1.29px;">22/10/2029</div>
<div class="tx" style="left:3385.0px;top:561.6px;font-size:30px;color:#4f4f4f;letter-spacing:0.84px;">22/10/2024 02:37</div>
<div class="abs" style="left:652px;top:522px;width:3076px;height:2px;background:#d9d9d9"></div>
</div>
<div class="abs" style="left:3760px;top:400px;width:20px;height:834px;background:#c3c3c3"></div>
</body></html>
